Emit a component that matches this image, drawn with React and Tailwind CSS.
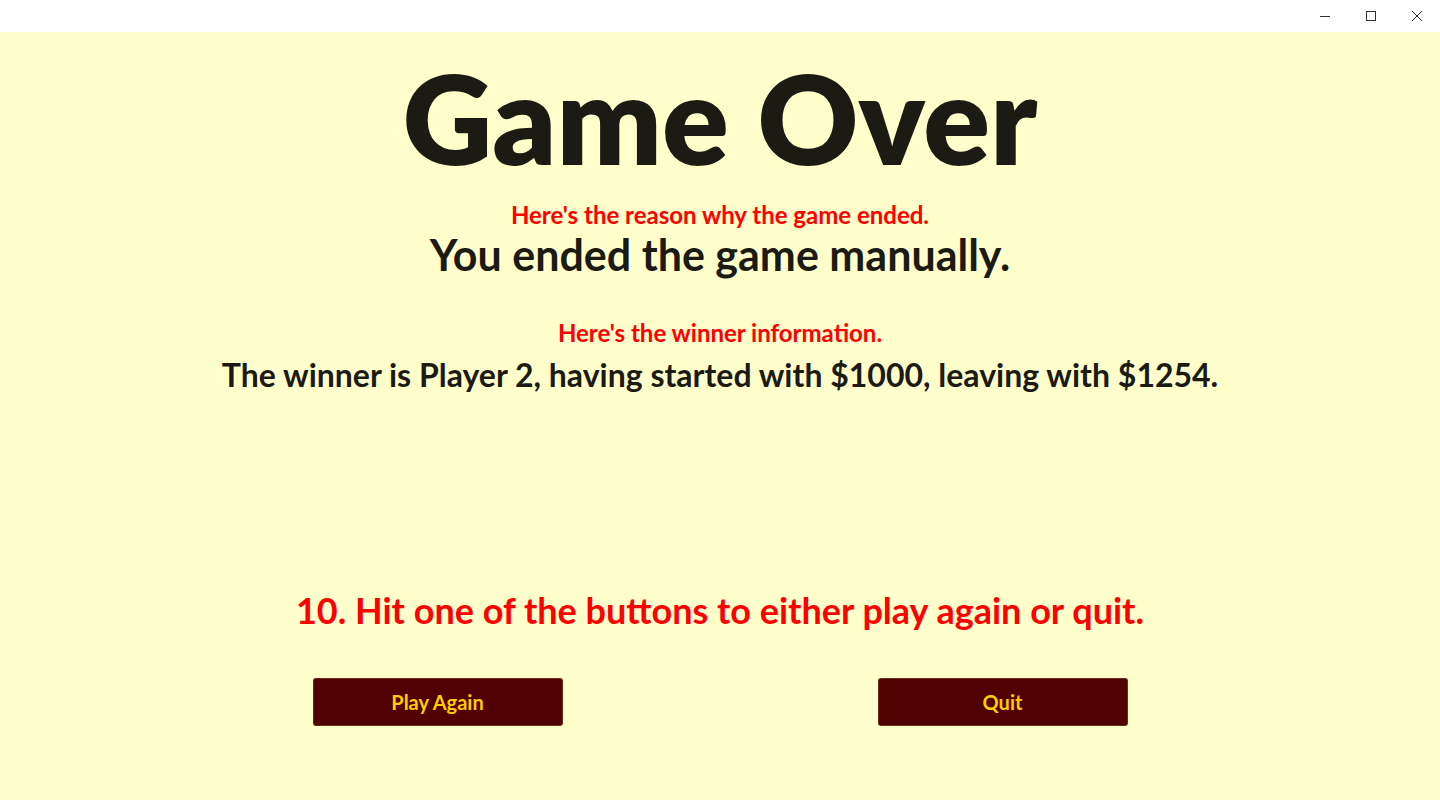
export default function App() {
  const font = { fontFamily: 'Lato, "Open Sans", sans-serif' };
  return (
    <div className="w-[1440px] h-[800px] flex flex-col bg-white overflow-hidden" style={font}>
      <div className="h-[32px] flex justify-end bg-white">
        <div className="w-[46px] h-[32px] flex items-center justify-center">
          <svg width="10" height="10" viewBox="0 0 10 10"><path d="M0 5.5h10" stroke="#333" strokeWidth="1" /></svg>
        </div>
        <div className="w-[46px] h-[32px] flex items-center justify-center">
          <svg width="10" height="10" viewBox="0 0 10 10"><rect x="0.5" y="0.5" width="9" height="9" fill="none" stroke="#333" strokeWidth="1" /></svg>
        </div>
        <div className="w-[46px] h-[32px] flex items-center justify-center">
          <svg width="10" height="10" viewBox="0 0 10 10"><path d="M0 0L10 10M10 0L0 10" stroke="#333" strokeWidth="1" /></svg>
        </div>
      </div>
      <div className="flex-1 bg-[#ffffcc] flex flex-col items-center">
        <h1 className="mt-[10.5px] text-[124px] leading-[149px] font-extrabold text-[#1b1b14]">Game Over</h1>
        <p className="mt-[8px] text-[24px] leading-[29px] font-bold text-[#ff0000]">Here's the reason why the game ended.</p>
        <p className="mt-0 text-[43px] leading-[52px] font-bold text-[#1b1b14]">You ended the game manually.</p>
        <p className="mt-[37px] text-[24px] leading-[29px] font-bold text-[#ff0000]">Here's the winner information.</p>
        <p className="mt-[9px] text-[32px] leading-[38px] font-bold text-[#1b1b14]">The winner is Player 2, having started with $1000, leaving with $1254.</p>
        <p className="mt-[195px] text-[36px] leading-[43px] font-bold text-[#ff0000]">10. Hit one of the buttons to either play again or quit.</p>
        <div className="mt-[46px] w-[1130px] grid grid-cols-2">
          <div className="flex justify-center">
            <button className="w-[250px] h-[48px] bg-[#500000] rounded-[3px] border border-[#8a6a4a]/40 text-[#ffcc00] text-[20px] font-bold">Play Again</button>
          </div>
          <div className="flex justify-center">
            <button className="w-[250px] h-[48px] bg-[#500000] rounded-[3px] border border-[#8a6a4a]/40 text-[#ffcc00] text-[20px] font-bold">Quit</button>
          </div>
        </div>
      </div>
    </div>
  );
}
